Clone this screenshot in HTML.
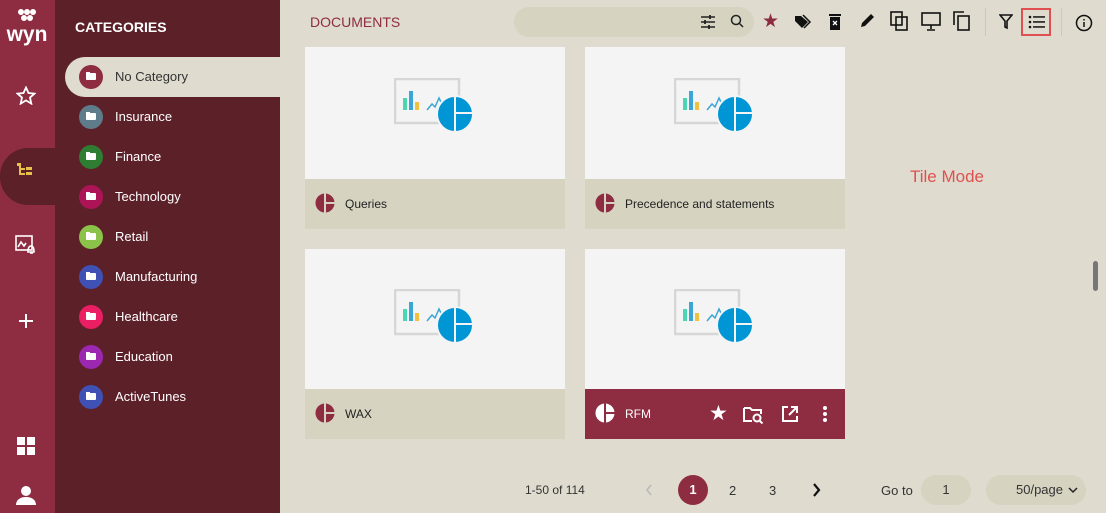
<!DOCTYPE html>
<html><head><meta charset="utf-8"><style>
*{margin:0;padding:0;box-sizing:border-box}
body{width:1106px;height:513px;overflow:hidden;background:#dfdccf;font-family:"Liberation Sans",sans-serif;position:relative}
.rail{position:absolute;left:0;top:0;width:55px;height:513px;background:#8e2c41}
.panel{position:absolute;left:55px;top:0;width:225px;height:513px;background:#5c2029}
.act{position:absolute;left:0;top:148px;width:60px;height:57px;background:#5c2029;border-radius:28px 0 0 28px}
.cat{position:absolute;left:79px;width:200px;height:24px;color:#fff;font-size:13px;line-height:24px}
.cat i{position:absolute;left:0;top:0;width:24px;height:24px;border-radius:50%}
.cat i:after{content:"";position:absolute;left:7px;top:8px;width:10px;height:7px;background:#fff;border-radius:1px}
.cat i:before{content:"";position:absolute;left:7px;top:7px;width:4px;height:2px;background:#fff}
.cat span{position:absolute;left:36px}
.sel{position:absolute;left:65px;top:57px;width:215px;height:40px;background:#dfdccf;border-radius:20px 0 0 20px}
.tile{position:absolute;width:260px;background:#f4f4f4}
.tb{position:absolute;left:0;width:260px;height:50px;background:#d6d3c1;font-size:12px;color:#222;line-height:50px;padding-left:40px}
.tb svg{position:absolute;left:10px;top:14px}
.ic{position:absolute}
.pg{position:absolute;font-size:13px;color:#333}
</style></head><body>
<div class="rail">
 <svg class="ic" style="left:5px;top:8px" width="44" height="38" viewBox="0 0 44 38"><g fill="#fff"><circle cx="16" cy="4" r="3"/><circle cx="22" cy="4" r="3"/><circle cx="28" cy="4" r="3"/><circle cx="19" cy="10" r="3"/><circle cx="25" cy="10" r="3"/></g><text x="22" y="33" text-anchor="middle" fill="#fff" font-size="21" font-weight="bold" font-family="Liberation Sans">wyn</text></svg>
 <div class="act"></div>
 <svg class="ic" style="left:16px;top:86px" width="20" height="19" fill="none" stroke="#fff" stroke-width="1.8"><path d="M10 1.5l2.5 5.5 6 .6-4.5 4 1.3 6-5.3-3.2-5.3 3.2 1.3-6-4.5-4 6-.6z"/></svg>
 <svg class="ic" style="left:17px;top:163px" width="18" height="14"><g fill="#e8c04a"><rect x="0" y="0" width="4" height="3"/><rect x="2" y="3" width="2" height="9"/><rect x="2" y="5" width="6" height="2"/><rect x="2" y="10" width="6" height="2"/><rect x="9" y="4" width="6" height="3"/><rect x="9" y="9" width="6" height="3"/></g></svg>
 <svg class="ic" style="left:15px;top:235px" width="22" height="20" fill="none" stroke="#fff" stroke-width="1.6"><rect x="1" y="1" width="16" height="14"/><path d="M3 12l3-5 3 4 2-3"/><path d="M13 17c0-4 1-6 3-6s3 2 3 6zM15 18h3"/></svg>
 <svg class="ic" style="left:19px;top:314px" width="14" height="14" stroke="#fff" stroke-width="2"><path d="M7 0v14M0 7h14"/></svg>
 <svg class="ic" style="left:17px;top:437px" width="18" height="18" fill="#fff"><rect x="0" y="0" width="8" height="8"/><rect x="10" y="0" width="8" height="8"/><rect x="0" y="10" width="8" height="8"/><rect x="10" y="10" width="8" height="8"/></svg>
 <svg class="ic" style="left:16px;top:485px" width="20" height="22" fill="#fff"><circle cx="10" cy="6" r="5"/><path d="M0 20c0-5 4-8 10-8s10 3 10 8z"/></svg>
</div>
<div class="panel">
 <div style="position:absolute;left:20px;top:19px;color:#fff;font-weight:bold;font-size:14px">CATEGORIES</div>
</div>
<div class="sel"></div>
<div class="cat" style="top:65px;color:#333"><i style="background:#8e2c41"></i><span>No Category</span></div>
<div class="cat" style="top:105px"><i style="background:#5f7c8a"></i><span>Insurance</span></div>
<div class="cat" style="top:145px"><i style="background:#2e7d32"></i><span>Finance</span></div>
<div class="cat" style="top:185px"><i style="background:#ad1457"></i><span>Technology</span></div>
<div class="cat" style="top:225px"><i style="background:#8bc34a"></i><span>Retail</span></div>
<div class="cat" style="top:265px"><i style="background:#3f51b5"></i><span>Manufacturing</span></div>
<div class="cat" style="top:305px"><i style="background:#e91e63"></i><span>Healthcare</span></div>
<div class="cat" style="top:345px"><i style="background:#9c27b0"></i><span>Education</span></div>
<div class="cat" style="top:385px"><i style="background:#3f51b5"></i><span>ActiveTunes</span></div>

<div style="position:absolute;left:310px;top:14px;color:#8e2c41;font-size:14px">DOCUMENTS</div>
<div style="position:absolute;left:514px;top:7px;width:240px;height:30px;border-radius:15px;background:#d6d3c1"></div>
<svg class="ic" style="left:700px;top:14px" width="60" height="16" fill="none" stroke="#222" stroke-width="1.5"><path d="M1 3h14M1 8h14M1 13h14"/><path d="M10 1v4M5 6v4M9 11v4" stroke-width="1.8"/><circle cx="36" cy="6" r="4.5"/><path d="M39 9l4 4"/></svg>
<div style="position:absolute;left:762px;top:10px;color:#8e2c41;font-size:19px">★</div>
<svg class="ic" style="left:794px;top:14px" width="18" height="16"><path d="M1 2v5l7 7 6-6-7-6z" fill="#111"/><path d="M9 1l7 7-6 6" stroke="#111" stroke-width="1.5" fill="none"/></svg>
<svg class="ic" style="left:828px;top:13px" width="14" height="17"><rect x="2" y="4" width="10" height="13" fill="#111"/><rect x="1" y="1" width="12" height="2" fill="#111"/><path d="M5 8l4 4M9 8l-4 4" stroke="#fff" stroke-width="1.3"/></svg>
<svg class="ic" style="left:859px;top:13px" width="16" height="16"><path d="M2 14l1-4 9-9 3 3-9 9z" fill="#111"/></svg>
<svg class="ic" style="left:890px;top:11px" width="18" height="20" fill="none" stroke="#111" stroke-width="1.6"><rect x="1" y="1" width="11" height="13"/><rect x="6" y="6" width="11" height="13"/></svg>
<svg class="ic" style="left:921px;top:12px" width="20" height="19" fill="none" stroke="#111" stroke-width="1.6"><rect x="1" y="1" width="18" height="12"/><path d="M10 13v4M6 18h8"/></svg>
<svg class="ic" style="left:953px;top:11px" width="18" height="20" fill="none" stroke="#111" stroke-width="1.6"><path d="M1 14V1h10"/><rect x="5" y="5" width="11" height="14"/></svg>
<div style="position:absolute;left:985px;top:8px;width:1px;height:28px;background:#ccc9ba"></div>
<svg class="ic" style="left:999px;top:14px" width="14" height="16" fill="none" stroke="#111" stroke-width="1.6"><path d="M1 1h12l-5 6v7l-2-1V7z"/></svg>
<div style="position:absolute;left:1021px;top:8px;width:30px;height:28px;border:2px solid #e05050"></div>
<svg class="ic" style="left:1028px;top:15px" width="18" height="14" fill="#111"><circle cx="2" cy="2" r="1.3"/><circle cx="2" cy="7" r="1.3"/><circle cx="2" cy="12" r="1.3"/><rect x="5" y="1.2" width="12" height="1.5"/><rect x="5" y="6.2" width="12" height="1.5"/><rect x="5" y="11.2" width="12" height="1.5"/></svg>
<div style="position:absolute;left:1061px;top:8px;width:1px;height:28px;background:#ccc9ba"></div>
<svg class="ic" style="left:1075px;top:14px" width="18" height="18" fill="none" stroke="#111" stroke-width="1.5"><circle cx="9" cy="9" r="7.5"/><path d="M9 8v5M9 5v1.5"/></svg>

<svg width="0" height="0" style="position:absolute"><defs>
<g id="th"><rect x="1" y="1" width="64" height="44" fill="none" stroke="#d6d6d6" stroke-width="2.5"/><rect x="9" y="20" width="4" height="12" fill="#4bd6b4"/><rect x="15" y="13" width="4" height="19" fill="#3aa6d6"/><rect x="21" y="24" width="4" height="8" fill="#f0c040"/><path d="M33 32l5-6 3 3 4-9 3 6" stroke="#3aa6d6" stroke-width="1.5" fill="none"/><circle cx="61" cy="36" r="18" fill="#0096d6" stroke="#f4f4f4" stroke-width="2"/><path d="M61 18v36M61 35h18" stroke="#f4f4f4" stroke-width="2"/></g>
<g id="pie"><circle cx="10" cy="10" r="10"/><path d="M10 0v20M10 10h10" stroke-width="2"/></g>
</defs></svg>

<div class="tile" style="left:305px;top:47px;height:182px"><svg style="position:absolute;left:89px;top:31px" width="82" height="58"><use href="#th"/></svg><div class="tb" style="top:132px"><svg width="20" height="20"><use href="#pie" fill="#8e2c41" stroke="#d6d3c1"/></svg>Queries</div></div>
<div class="tile" style="left:585px;top:47px;height:182px"><svg style="position:absolute;left:89px;top:31px" width="82" height="58"><use href="#th"/></svg><div class="tb" style="top:132px"><svg width="20" height="20"><use href="#pie" fill="#8e2c41" stroke="#d6d3c1"/></svg>Precedence and statements</div></div>
<div class="tile" style="left:305px;top:249px;height:190px"><svg style="position:absolute;left:89px;top:40px" width="82" height="58"><use href="#th"/></svg><div class="tb" style="top:140px"><svg width="20" height="20"><use href="#pie" fill="#8e2c41" stroke="#d6d3c1"/></svg>WAX</div></div>
<div class="tile" style="left:585px;top:249px;height:190px"><svg style="position:absolute;left:89px;top:40px" width="82" height="58"><use href="#th"/></svg><div class="tb" style="top:140px;background:#8e2c41;color:#fff"><svg width="20" height="20"><use href="#pie" fill="#fff" stroke="#8e2c41"/></svg>RFM
<span style="position:absolute;left:124px;top:0;font-size:21px">★</span>
<svg style="position:absolute;left:158px;top:17px" width="22" height="18" fill="none" stroke="#fff" stroke-width="2"><path d="M1 2h6l2 2h9v4M1 2v13h8"/><circle cx="14" cy="12" r="3.5"/><path d="M16.5 14.5l3 3"/></svg>
<svg style="position:absolute;left:196px;top:16px" width="18" height="18" fill="none" stroke="#fff" stroke-width="2"><path d="M7 2H2v14h14v-5"/><path d="M10 2h6v6M16 2l-8 8"/></svg>
<svg style="position:absolute;left:237px;top:17px" width="6" height="16" fill="#fff"><circle cx="3" cy="2" r="2"/><circle cx="3" cy="8" r="2"/><circle cx="3" cy="14" r="2"/></svg>
</div></div>

<div style="position:absolute;left:910px;top:167px;color:#e05050;font-size:17px">Tile Mode</div>
<div style="position:absolute;left:1093px;top:261px;width:5px;height:30px;background:#777;border-radius:3px"></div>

<div class="pg" style="left:525px;top:483px;font-size:12px">1-50 of 114</div>
<svg class="ic" style="left:645px;top:484px" width="8" height="12" fill="none" stroke="#bbb" stroke-width="1.8"><path d="M6 1l-4 5 4 5"/></svg>
<div style="position:absolute;left:678px;top:475px;width:30px;height:30px;border-radius:50%;background:#8e2c41;color:#fff;font-size:13px;font-weight:bold;text-align:center;line-height:30px">1</div>
<div class="pg" style="left:729px;top:483px">2</div>
<div class="pg" style="left:769px;top:483px">3</div>
<svg class="ic" style="left:812px;top:483px" width="10" height="14" fill="none" stroke="#111" stroke-width="2.2"><path d="M2 1l5 6-5 6"/></svg>
<div class="pg" style="left:881px;top:483px">Go to</div>
<div style="position:absolute;left:921px;top:475px;width:50px;height:30px;border-radius:15px;background:#d6d3c1;font-size:13px;color:#333;text-align:center;line-height:30px">1</div>
<div style="position:absolute;left:986px;top:475px;width:100px;height:30px;border-radius:15px;background:#d6d3c1;font-size:13px;color:#333;line-height:30px;padding-left:30px">50/page</div>
<svg class="ic" style="left:1068px;top:487px" width="10" height="7" fill="none" stroke="#222" stroke-width="1.5"><path d="M1 1l4 4 4-4"/></svg>
</body></html>
